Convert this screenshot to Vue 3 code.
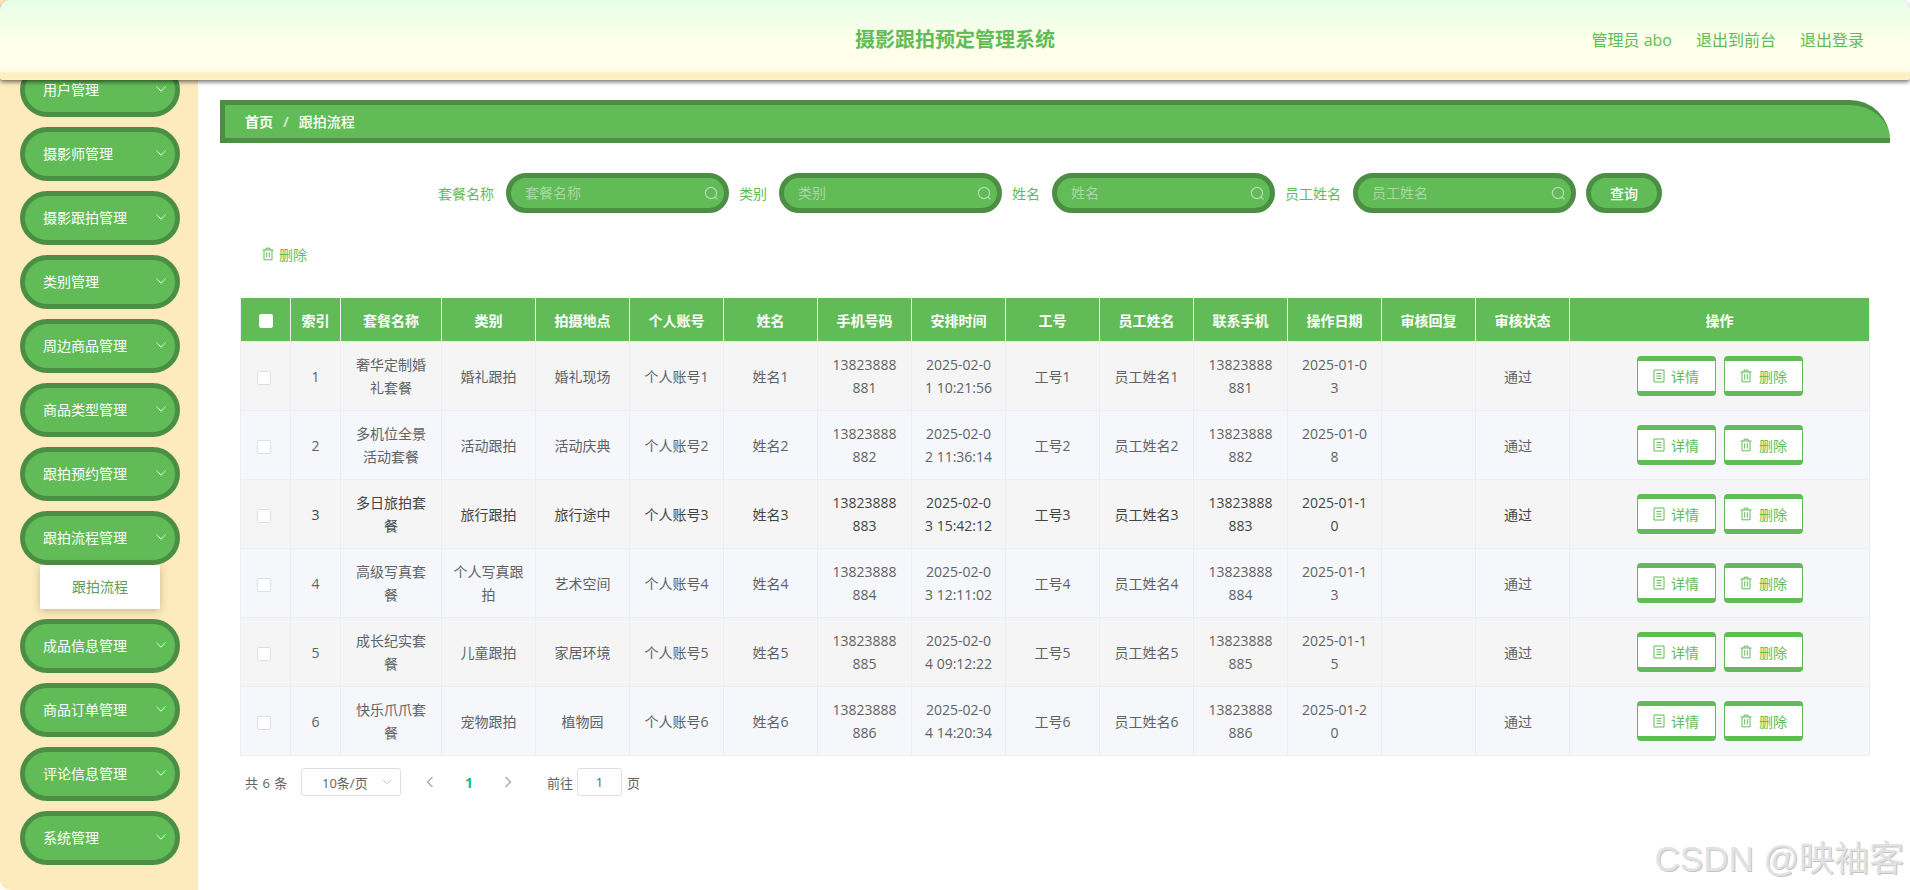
<template>
  <div class="page">
    <!-- 顶部 -->
    <header class="top-bar">
      <span></span>
      <div class="sys-title">摄影跟拍预定管理系统</div>
      <div class="top-links">
        <span>管理员 abo</span>
        <span>退出到前台</span>
        <span>退出登录</span>
      </div>
    </header>

    <!-- 左侧菜单 -->
    <aside class="side">
      <ul class="menu">
        <li v-for="m in menus" :key="m">
          <div class="menu-item">
            <span>{{ m }}</span>
            <svg class="chev" width="10" height="6" viewBox="0 0 10 6"><path d="M.6.6 5 5.2 9.4.6" fill="none" stroke="#fff" stroke-width="1"/></svg>
          </div>
          <div v-if="m === '跟拍流程管理'" class="sub-item">跟拍流程</div>
        </li>
      </ul>
    </aside>

    <main class="main">
      <div class="crumb">
        <b>首页</b><i>/</i><span>跟拍流程</span>
      </div>

      <!-- 查询 -->
      <div class="search-row">
        <div v-for="f in filters" :key="f" class="field">
          <label>{{ f }}</label>
          <div class="input-box">
            <input :placeholder="f" />
            <svg width="15" height="15" viewBox="0 0 15 15"><circle cx="7" cy="7" r="5.6" fill="none" stroke="#b4dcaf" stroke-width="1.2"/><path d="M11 11l2.4 2.4" stroke="#b4dcaf" stroke-width="1.2"/></svg>
          </div>
        </div>
        <button class="query-btn">查询</button>
      </div>

      <div class="tools">
        <svg class="ico" width="14" height="14" viewBox="0 0 14 14"><path d="M1.5 3h11M5 3V1.2h4V3M3 3v9.8h8V3M5.7 5.2v5.4M8.3 5.2v5.4" fill="none" stroke="#61bc57" stroke-width="1"/></svg>
        <span>删除</span>
      </div>

      <!-- 表格 -->
      <table class="grid">
        <colgroup>
          <col style="width:50px" /><col style="width:50px" /><col style="width:101px" />
          <col v-for="n in 12" :key="n" style="width:94px" />
          <col />
        </colgroup>
        <thead>
          <tr>
            <th><span class="check head-check"></span></th>
            <th v-for="h in heads" :key="h">{{ h }}</th>
          </tr>
        </thead>
        <tbody>
          <tr v-for="(r, i) in rows" :key="i" :class="{ even: i % 2 === 1, dark: i === 2 }">
            <td><span class="check body-check"></span></td>
            <td>{{ i + 1 }}</td>
            <td>{{ r.name }}</td>
            <td>{{ r.type }}</td>
            <td>{{ r.place }}</td>
            <td>个人账号{{ i + 1 }}</td>
            <td>姓名{{ i + 1 }}</td>
            <td>{{ 13823888881 + i }}</td>
            <td>{{ r.time }}</td>
            <td>工号{{ i + 1 }}</td>
            <td>员工姓名{{ i + 1 }}</td>
            <td>{{ 13823888881 + i }}</td>
            <td>{{ r.date }}</td>
            <td></td>
            <td class="state">通过</td>
            <td class="ops">
              <button class="op-btn">
                <svg width="12" height="14" viewBox="0 0 12 14"><path d="M1 1h10v12H1zM3.5 4.5h5M3.5 7h5M3.5 9.5h5" fill="none" stroke="#61bc57" stroke-width="1"/></svg>
                详情
              </button>
              <button class="op-btn">
                <svg width="14" height="14" viewBox="0 0 14 14"><path d="M1.5 3h11M5 3V1.2h4V3M3 3v9.8h8V3M5.7 5.2v5.4M8.3 5.2v5.4" fill="none" stroke="#61bc57" stroke-width="1"/></svg>
                删除
              </button>
            </td>
          </tr>
        </tbody>
      </table>

      <!-- 分页 -->
      <div class="pager">
        <span class="total">共 6 条</span>
        <div class="size-box">
          <span>10条/页</span>
          <svg width="10" height="6" viewBox="0 0 10 6"><path d="M1 .8 5 4.8 9 .8" fill="none" stroke="#c0c4cc" stroke-width="1"/></svg>
        </div>
        <span class="nav first">
          <svg width="8" height="12" viewBox="0 0 8 12"><path d="M6.5 1 1.5 6l5 5" fill="none" stroke="#a8abb2" stroke-width="1.4"/></svg>
        </span>
        <span class="nav num">1</span>
        <span class="nav">
          <svg width="8" height="12" viewBox="0 0 8 12"><path d="M1.5 1l5 5-5 5" fill="none" stroke="#a8abb2" stroke-width="1.4"/></svg>
        </span>
        <span class="goto">前往</span>
        <div class="jump">1</div>
        <span class="page-word">页</span>
      </div>
    </main>

    <div class="mark">CSDN @映袖客</div>
  </div>
</template>

<script setup>
const menus = ['用户管理', '摄影师管理', '摄影跟拍管理', '类别管理', '周边商品管理', '商品类型管理', '跟拍预约管理', '跟拍流程管理', '成品信息管理', '商品订单管理', '评论信息管理', '系统管理']

const filters = ['套餐名称', '类别', '姓名', '员工姓名']

const heads = ['索引', '套餐名称', '类别', '拍摄地点', '个人账号', '姓名', '手机号码', '安排时间', '工号', '员工姓名', '联系手机', '操作日期', '审核回复', '审核状态', '操作']

const rows = [
  { name: '奢华定制婚礼套餐', type: '婚礼跟拍', place: '婚礼现场', time: '2025-02-01 10:21:56', date: '2025-01-03' },
  { name: '多机位全景活动套餐', type: '活动跟拍', place: '活动庆典', time: '2025-02-02 11:36:14', date: '2025-01-08' },
  { name: '多日旅拍套餐', type: '旅行跟拍', place: '旅行途中', time: '2025-02-03 15:42:12', date: '2025-01-10' },
  { name: '高级写真套餐', type: '个人写真跟拍', place: '艺术空间', time: '2025-02-03 12:11:02', date: '2025-01-13' },
  { name: '成长纪实套餐', type: '儿童跟拍', place: '家居环境', time: '2025-02-04 09:12:22', date: '2025-01-15' },
  { name: '快乐爪爪套餐', type: '宠物跟拍', place: '植物园', time: '2025-02-04 14:20:34', date: '2025-01-20' }
]
</script>

<style>
html, body {
  margin: 0;
  background: #fff;
  overflow: hidden;
}
</style>

<style scoped>
.page {
  position: relative;
  display: flex;
  width: 1910px;
  height: 890px;
  overflow: hidden;
  font-family: "Open Sans", "Noto Sans CJK SC", sans-serif;
  font-size: 14px;
  color: #606266;
}

.top-bar {
  position: absolute;
  left: 0;
  top: 0;
  z-index: 5;
  box-sizing: border-box;
  width: 100%;
  height: 80px;
  display: grid;
  grid-template-columns: 1fr auto 1fr;
  align-items: center;
  padding: 0 46px;
  border-radius: 10px 10px 3px 3px;
  background: linear-gradient(#e6fde9 0, #f0ffe8 18px, #feffea 45px, #fffeea 71px, #fdf0c2 73px, #fdf0c2 80px);
  box-shadow: 0 2px 4px rgba(0, 0, 0, 0.55);
}

.sys-title {
  font-size: 20px;
  line-height: 28px;
  font-weight: 700;
  color: #61bc57;
}

.top-links {
  display: flex;
  justify-content: flex-end;
  gap: 24px;
  font-size: 16px;
  line-height: 24px;
  color: #61bc57;
}

.side {
  flex: none;
  width: 198px;
  height: 890px;
  background: #fdebbe;
  border-bottom-left-radius: 10px;
}

.menu {
  list-style: none;
  margin: 0;
  padding: 63px 0 0 20px;
  display: flex;
  flex-direction: column;
  gap: 10px;
}

.menu-item {
  box-sizing: border-box;
  width: 160px;
  height: 54px;
  padding: 0 9px 2px 18px;
  display: flex;
  align-items: center;
  justify-content: space-between;
  border: 5px solid #4c8f44;
  border-radius: 27px;
  background: #61bc57;
  color: #fff;
}

.sub-item {
  width: 120px;
  height: 44px;
  margin-left: 20px;
  line-height: 44px;
  text-align: center;
  background: #fff;
  color: #5f9e57;
  box-shadow: 0 2px 8px rgba(90, 70, 20, 0.3);
}

.main {
  flex: 1;
  min-width: 0;
  padding: 100px 20px 0 22px;
}

.crumb {
  box-sizing: border-box;
  height: 43px;
  padding: 0 0 1px 20px;
  display: flex;
  align-items: center;
  background: #61bc57;
  border-style: solid;
  border-color: #4c8f44;
  border-width: 5px 0 5px 5px;
  border-radius: 0 40px 0 0;
  color: #fff;
  font-weight: 500;
}

.crumb b {
  font-weight: 700;
}

.crumb i {
  margin: 0 10px;
  font-style: normal;
  font-weight: 700;
  color: #cfe8cb;
}

.search-row {
  margin-top: 30px;
  padding-right: 10px;
  display: flex;
  justify-content: center;
  gap: 10px;
}

.field {
  display: flex;
  align-items: center;
}

.field label {
  margin: 0 12px 1px 0;
  color: #61bc57;
}

.input-box {
  box-sizing: border-box;
  width: 223px;
  height: 40px;
  padding: 0 5px 0 14px;
  display: flex;
  align-items: center;
  border: 5px solid #4c8f44;
  border-radius: 20px;
  background: #61bc57;
}

.input-box input {
  flex: 1;
  min-width: 0;
  padding: 0 0 1px;
  border: 0;
  outline: 0;
  background: transparent;
  font: inherit;
  color: #fff;
}

.input-box input::placeholder {
  color: #a9d8a4;
  opacity: 1;
}

.query-btn {
  box-sizing: border-box;
  width: 76px;
  height: 40px;
  padding: 0;
  border: 5px solid #4c8f44;
  border-radius: 20px;
  background: #61bc57;
  font: inherit;
  font-weight: 500;
  color: #fff;
}

.tools {
  margin: 27px 0 30px 41px;
  height: 28px;
  display: flex;
  align-items: center;
  gap: 4px;
  color: #61bc57;
}

.grid {
  width: 1630px;
  margin-left: 20px;
  border-collapse: separate;
  border-spacing: 0;
  table-layout: fixed;
  border-left: 1px solid #ebeef5;
}

.grid th {
  box-sizing: border-box;
  height: 44px;
  padding: 0;
  background: #61bc57;
  border-right: 1px solid #ebeef5;
  border-bottom: 1px solid #ebeef5;
  color: #fff;
  font-weight: 700;
  text-align: center;
}

.grid td {
  box-sizing: border-box;
  height: 69px;
  padding: 0 11px;
  background: #f5f5f5;
  border-right: 1px solid #ebeef5;
  border-bottom: 1px solid #ebeef5;
  line-height: 23px;
  text-align: center;
  word-break: break-all;
}

.grid tr.even td {
  background: #f5f7fa;
}

.grid tr.dark td {
  color: #444;
}

.grid td.state {
  padding-right: 20px;
}

.grid td.ops {
  padding: 0;
}

.check {
  box-sizing: border-box;
  display: inline-block;
  width: 14px;
  height: 14px;
  vertical-align: middle;
  background: #fff;
  border: 1px solid #dcdfe6;
  border-radius: 2px;
}

.head-check {
  border-color: #fff;
}

.body-check {
  margin-right: 4px;
}

.op-btn {
  box-sizing: border-box;
  width: 79px;
  height: 40px;
  padding: 0;
  margin: 0 4px;
  display: inline-flex;
  align-items: center;
  justify-content: center;
  gap: 6px;
  background: #fff;
  border: solid #61bc57;
  border-width: 5px 1px;
  border-radius: 4px;
  font: inherit;
  color: #61bc57;
  vertical-align: middle;
}

.pager {
  margin: 12px 0 0 25px;
  height: 28px;
  display: flex;
  align-items: center;
  font-size: 13px;
}

.total {
  width: 41px;
  margin-right: 15px;
  white-space: nowrap;
  word-spacing: 1px;
}

.size-box {
  box-sizing: border-box;
  width: 100px;
  height: 28px;
  padding: 0 8px 0 20px;
  display: flex;
  align-items: center;
  justify-content: space-between;
  border: 1px solid #dcdfe6;
  border-radius: 3px;
}

.nav {
  width: 30px;
  margin-left: 9px;
  display: flex;
  align-items: center;
  justify-content: center;
}

.nav.first {
  margin-left: 14px;
}

.nav.num {
  font-size: 14px;
  font-weight: 700;
  color: #1abc7c;
}

.goto {
  margin-left: 24px;
}

.jump {
  box-sizing: border-box;
  width: 45px;
  height: 28px;
  margin-left: 4px;
  line-height: 26px;
  text-align: center;
  border: 1px solid #dcdfe6;
  border-radius: 3px;
}

.page-word {
  margin-left: 5px;
}

.mark {
  position: absolute;
  right: 6px;
  bottom: 10px;
  z-index: 6;
  font-family: "Liberation Sans", "Noto Sans CJK SC", sans-serif;
  font-size: 35px;
  line-height: 42px;
  color: #e2e2e2;
  text-shadow: 1px 1px 0 #c4c4c4;
  white-space: nowrap;
}
</style>
